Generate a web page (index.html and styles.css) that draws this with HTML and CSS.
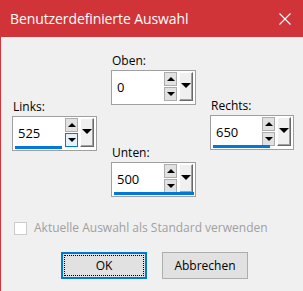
FILE: index.html
```html
<!DOCTYPE html>
<html lang="de">
<head>
<meta charset="utf-8">
<title>Benutzerdefinierte Auswahl</title>
<link rel="stylesheet" href="styles.css">
</head>
<body>
<div class="window">
  <div class="titlebar">
    <span class="title">Benutzerdefinierte Auswahl</span>
    <svg class="close" width="12" height="12" viewBox="0 0 12 12"><path d="M0.5 0.5 L11.5 11.5 M11.5 0.5 L0.5 11.5" stroke="#fff" stroke-width="1.1" fill="none"/></svg>
  </div>
  <div class="content">
    <div class="fields">
      <div class="col col-side col-left">
        <div class="field">
          <div class="label">Links:</div>
          <div class="spin">
            <div class="value">525</div>
            <div class="arrows">
              <div class="btn up"><span class="tri-up"></span></div>
              <div class="btn down hover"><span class="tri-down"></span></div>
            </div>
            <div class="drop"><span class="tri-drop"></span></div>
            <div class="bar" style="width:47px"></div>
          </div>
        </div>
      </div>
      <div class="col col-mid">
        <div class="field">
          <div class="label">Oben:</div>
          <div class="spin">
            <div class="value">0</div>
            <div class="arrows">
              <div class="btn up"><span class="tri-up"></span></div>
              <div class="btn down"><span class="tri-down"></span></div>
            </div>
            <div class="drop"><span class="tri-drop"></span></div>
          </div>
        </div>
        <div class="field field-bottom">
          <div class="label">Unten:</div>
          <div class="spin">
            <div class="value">500</div>
            <div class="arrows">
              <div class="btn up"><span class="tri-up"></span></div>
              <div class="btn down"><span class="tri-down"></span></div>
            </div>
            <div class="drop"><span class="tri-drop"></span></div>
            <div class="bar" style="width:80px"></div>
          </div>
        </div>
      </div>
      <div class="col col-side col-right">
        <div class="field">
          <div class="label">Rechts:</div>
          <div class="spin">
            <div class="value">650</div>
            <div class="arrows">
              <div class="btn up"><span class="tri-up"></span></div>
              <div class="btn down"><span class="tri-down"></span></div>
            </div>
            <div class="drop"><span class="tri-drop"></span></div>
            <div class="bar" style="width:57px"></div>
          </div>
        </div>
      </div>
    </div>
    <label class="check">
      <span class="box"></span>
      <span class="check-label">Aktuelle Auswahl als Standard verwenden</span>
    </label>
    <div class="buttons">
      <button class="button default"><span class="focus">OK</span></button>
      <button class="button">Abbrechen</button>
    </div>
  </div>
</div>
</body>
</html>
```
FILE: styles.css
```css
* { box-sizing: border-box; }
html, body {
  margin: 0;
  padding: 0;
  width: 303px;
  height: 291px;
  overflow: hidden;
  background: #f0f0f0;
  font-family: "Open Sans", "Noto Sans", sans-serif;
}
.window {
  width: 303px;
  height: 291px;
  border-left: 1px solid #d13438;
  background: #f0f0f0;
}
.titlebar {
  height: 37px;
  background: #d13438;
  color: #fff;
  display: flex;
  align-items: center;
  justify-content: space-between;
  padding: 0 12px 1px 9px;
}
.title {
  font-size: 14px;
  letter-spacing: -0.1px;
}
.close { display: block; margin-top: 2px; }
.content {
  padding: 16px 0 0 11px;
}
.fields {
  display: flex;
  gap: 14px;
  height: 153px;
}
.col {
  width: 85px;
  display: flex;
  flex-direction: column;
}
.col-left { padding-top: 46px; }
.col-right { padding-top: 45px; width: 84px; }
.field-bottom { margin-top: 40px; }
.label {
  font-size: 12px;
  line-height: 16px;
  height: 17px;
  color: #000;
  padding-left: 1px;
}
.spin {
  position: relative;
  height: 35px;
  border: 1px solid #a0a0a0;
  background: #fff;
  display: flex;
  align-items: stretch;
  padding: 1px 2px 3px 0;
}
.value {
  flex: 1;
  font-size: 13px;
  line-height: 30px;
  padding-left: 5px;
  color: #000;
}
.arrows {
  display: flex;
  flex-direction: column;
  gap: 1px;
  width: 13px;
  margin-right: 2px;
}
.btn {
  flex: 1;
  background: #e1e1e1;
  border: 1px solid #adadad;
  display: flex;
  align-items: center;
  justify-content: center;
}
.btn.hover {
  background: #e5f1fb;
  border-color: #0078d7;
}
.tri-up {
  width: 0; height: 0;
  border-left: 4px solid transparent;
  border-right: 4px solid transparent;
  border-bottom: 4px solid #000;
}
.tri-down {
  width: 0; height: 0;
  border-left: 4px solid transparent;
  border-right: 4px solid transparent;
  border-top: 4px solid #000;
}
.drop {
  width: 14px;
  background: #f0f0f0;
  border-top: 1px solid #fff;
  border-left: 1px solid #fff;
  border-right: 1px solid #696969;
  border-bottom: 1px solid #696969;
  box-shadow: inset -1px -1px 0 #a0a0a0;
  display: flex;
  justify-content: center;
  padding-top: 10px;
}
.tri-drop {
  width: 0; height: 0;
  border-left: 5px solid transparent;
  border-right: 5px solid transparent;
  border-top: 5px solid #000;
}
.bar {
  position: absolute;
  left: 2px;
  bottom: 1px;
  height: 3px;
  background: #0078d7;
}
.check {
  display: flex;
  align-items: center;
  gap: 7px;
  margin-top: 14px;
  padding-left: 2px;
}
.box {
  width: 13px;
  height: 13px;
  border: 1px solid #cccccc;
  background: #fff;
}
.check-label {
  font-size: 12px;
  color: #a0a0a0;
  line-height: 16px;
}
.buttons {
  display: flex;
  gap: 15px;
  margin-top: 16px;
  padding-left: 49px;
}
.button {
  width: 86px;
  height: 27px;
  background: #e1e1e1;
  border: 1px solid #adadad;
  font-family: "Open Sans", "Noto Sans", sans-serif;
  font-size: 12px;
  color: #000;
  padding: 0;
  margin: 0;
  display: flex;
  align-items: center;
  justify-content: center;
}
.button.default {
  border: 2px solid #0078d7;
  padding: 1px;
}
.focus {
  flex: 1;
  align-self: stretch;
  border: 1px dotted #000;
  display: flex;
  align-items: center;
  justify-content: center;
}
```
